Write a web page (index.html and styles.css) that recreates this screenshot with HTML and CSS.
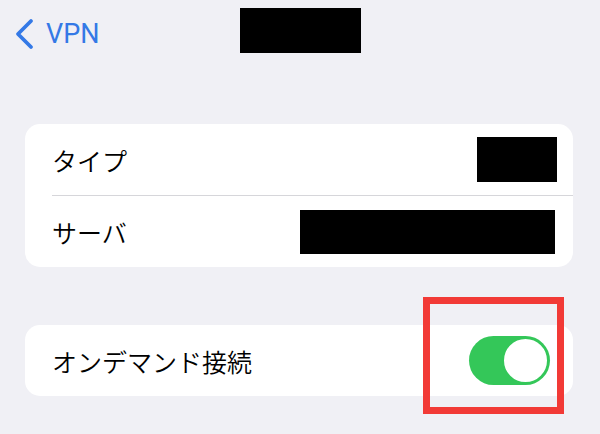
FILE: index.html
```html
<!DOCTYPE html>
<html lang="ja">
<head>
    <meta charset="UTF-8">
    <meta name="viewport" content="width=device-width, initial-scale=1.0">
    <title>VPN</title>
    <link rel="stylesheet" href="styles.css">
</head>
<body>

    <header class="nav">
        <a href="#" class="nav-back">
            <svg class="chevron" width="22" height="32" viewBox="0 0 22 32">
                <path d="M18 3 L5 16 L18 29" fill="none" stroke="currentColor" stroke-width="3.8" stroke-linecap="round" stroke-linejoin="round"/>
            </svg>
            <span>VPN</span>
        </a>
        <div class="nav-title"></div>
        <div></div>
    </header>

    <main>
        <section class="card">
            <div class="row">
                <span class="label">タイプ</span>
                <span class="mask mask-type"></span>
            </div>
            <div class="sep"></div>
            <div class="row">
                <span class="label">サーバ</span>
                <span class="mask mask-server"></span>
            </div>
        </section>

        <section class="card card-ondemand">
            <div class="row">
                <span class="label">オンデマンド接続</span>
                <span class="switch on"></span>
            </div>
        </section>
    </main>

    <div class="highlight"></div>

</body>
</html>
```

FILE: styles.css
```css
html, body { margin: 0; padding: 0; }
body { width: 600px; height: 434px; overflow: hidden; position: relative; background: #f0f0f5; font-family: "Noto Sans CJK JP", "Noto Sans", sans-serif; color: #000; }

.nav { display: grid; grid-template-columns: 1fr auto 1fr; align-items: start; padding-top: 8px; height: 124px; box-sizing: border-box; }
.nav-back { display: flex; align-items: center; gap: 11px; padding: 10px 0 0 13px; color: #3479e6; text-decoration: none; font-family: Roboto, "Liberation Sans", sans-serif; font-size: 27px; }
.chevron { display: block; }
.nav-title { width: 121px; height: 45px; background: #000; }

main { padding: 0 27px 0 25px; }
.card { background: #fff; border-radius: 15px; overflow: hidden; }
.card-ondemand { margin-top: 58px; }
.row { display: flex; align-items: center; justify-content: space-between; height: 71px; padding: 0 16px 0 27px; }
.sep { height: 1px; margin-left: 27px; background: #d6d6da; }
.label { font-size: 25px; font-weight: 350; }

.mask { display: block; background: #000; }
.mask-type { width: 80px; height: 45px; }
.mask-server { width: 255px; height: 44px; margin-right: 2px; }

.card-ondemand .row { padding-right: 23px; }
.switch { position: relative; display: block; width: 81px; height: 49px; border-radius: 25px; background: #34c759; }
.switch::after { content: ""; position: absolute; top: 1px; right: 1px; width: 43px; height: 43px; border-radius: 50%; background: #fff; border: 2px solid #34c759; }

.highlight { position: absolute; left: 423px; top: 297px; width: 141px; height: 117px; box-sizing: border-box; border: 7px solid #f23a36; }
```
